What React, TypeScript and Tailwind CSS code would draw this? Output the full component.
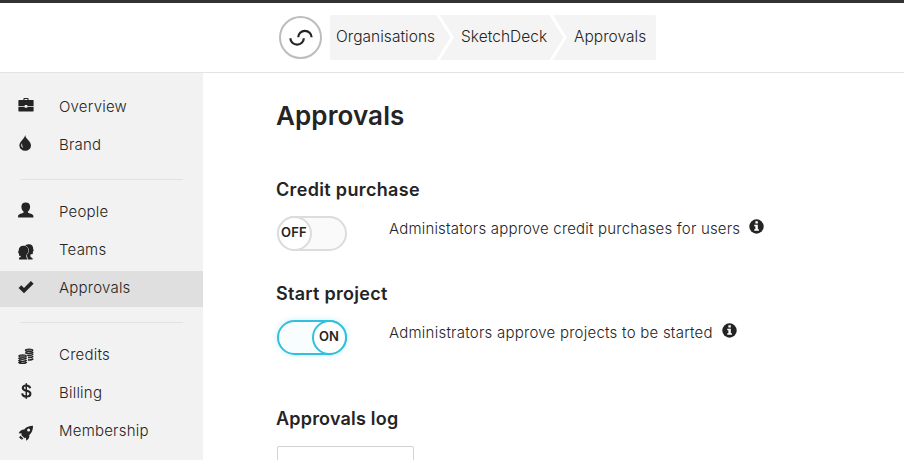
import React from "react";

function Briefcase() {
  return (
    <svg viewBox="0 0 16 16" className="h-4 w-4" fill="#242424">
      <path d="M5.400 3V2q0-1 1-1h3.200q1 0 1 1v1H15q.6 0 .6.6V9H9.300V8H6.700v1H.4V3.600Q.4 3 1 3zM6.500 3h3V2h-3zM.4 9.800h6.300v.9h2.600v-.9h6.300v4q0 .6-.6.6H1q-.6 0-.6-.6z" />
    </svg>
  );
}
function Drop() {
  return (
    <svg viewBox="0 0 16 16" className="h-4 w-4">
      <path fill="#242424" d="M7.200 0C7.500 4 13 6 13 10.500a5.800 5.300 0 0 1-11.600 0C1.400 6.500 6.500 4 7.200 0z" />
      <path d="M4 8C2.500 10.300 3.300 12.400 5.300 13.100 4.300 11.500 4.100 9.900 4 8z" fill="#f2f2f2" />
    </svg>
  );
}
function Person() {
  return (
    <svg viewBox="0 0 16 16" className="h-4 w-4" fill="#242424">
      <path d="M7.700.5c2.900 0 4.400 1.500 4.400 4.200 0 2-.8 3.800-2.200 4.800v.9c1 .9 5.500 1.500 5.500 3.500v1.600H.1v-1.600c0-2 4.500-2.600 5.500-3.500v-.9C4.200 8.500 3.400 6.700 3.400 4.700c0-2.700 1.500-4.200 4.300-4.200z" />
    </svg>
  );
}
function Team() {
  return (
    <svg viewBox="0 0 16 16" className="h-4 w-4" fill="#242424">
      <path d="M7.200 1.300C8.500.3 10 .2 11.200.2c2.700 0 4.100 2.300 3.900 4.400l.6 2.500-.8.5-.1 2.300-2.500.6.3 2.500 2 1.200v1.300H9.700z" />
      <path
        stroke="#f2f2f2"
        strokeWidth="1"
        paintOrder="stroke"
        d="M5.200 1.700c3.200 0 5.100 2.100 5.100 4.700 0 2.100-.9 3.300-1.900 4.500v2.300l1.200 2.300H1v-1.800l1.800-.8-.3-1.100H1V9.700L.1 8.500.7 6.300C.7 3.600 2.500 1.700 5.200 1.700z"
      />
    </svg>
  );
}
function Check() {
  return (
    <svg viewBox="0 0 16 16" className="h-4 w-4" fill="#242424">
      <path d="M.6 8.900 3.300 6.200 6 8.900 12.900 2 15.600 4.700 6 14.200z" />
    </svg>
  );
}
function Coins() {
  return (
    <svg viewBox="0 0 16 16" className="h-4 w-4" fill="#242424">
      <ellipse cx="11.100" cy="2.300" rx="4.300" ry="1.900" />
      <ellipse cx="4.600" cy="8.100" rx="4.300" ry="1.900" />
      <g fill="none" stroke="#242424" strokeWidth="1.600">
        <path d="M.5 9.800c1.500 1.900 6.700 1.900 8.200 0M.5 12c1.500 1.900 6.700 1.900 8.200 0M.5 14.100c1.500 1.900 6.700 1.900 8.200 0" />
        <path d="M7.200 4.500c2 1.400 6.700 1.200 8-.5M9.200 7.200c2 .4 5-.1 6-1.200M10 9.500c2 .2 4.300-.3 5.200-1.300M10 11.900c2 .2 4.300-.3 5.200-1.300" />
      </g>
      <path d="M8.400 2.300h5.400M1.900 8.100h5.400" stroke="#aaa" strokeWidth=".7" />
    </svg>
  );
}
function Dollar() {
  return (
    <svg viewBox="0 0 16 16" className="h-4 w-4" fill="none" stroke="#242424">
      <path d="M12.200 5.200C11.800 3.300 10.600 2.500 8.300 2.500 6.100 2.500 4.800 3.400 4.800 5c0 4 7.600 1.500 7.600 5.700 0 1.700-1.400 2.800-4.100 2.800-2.400 0-3.900-1.100-4.100-3.200" strokeWidth="2.100" />
      <path d="M8.300.2V15.800" strokeWidth="1.500" />
    </svg>
  );
}
function Rocket() {
  return (
    <svg viewBox="0 0 16 16" className="h-4 w-4" fill="#242424">
      <path fillRule="evenodd" d="M15 .8C11.300.8 8.300 1.900 6.200 4.600 3.800 4.500 2 5.600.7 8.300l3.200.1-.6 1.500 3.300 3.300 1.300-.6.300 3.200c2.500-1.500 3.500-3.300 3.100-5.700C13.800 8 15.200 4.800 15 .8zM10.600 3.600a1.500 1.500 0 1 1 0 3 1.500 1.500 0 0 1 0-3z" />
      <path d="M2.500 10.800.8 12.500l1.300.2-.2 1.200 1.500-.3.200 1.400L5.400 13.500z" />
    </svg>
  );
}
function Info() {
  return (
    <svg viewBox="0 0 16 16" className="h-[15px] w-[15px]">
      <circle cx="8" cy="8" r="7.700" fill="#242424" />
      <path fill="#fff" d="M6.800 2.500h2.600v2.300H6.800zM5.600 6h3.800v4.800h1.200v1.800H5.600v-1.800h1.200v-3H5.600z" />
    </svg>
  );
}

const groups = [
  [
    { label: "Overview", icon: <Briefcase />, nudge: "pb-[6px]" },
    { label: "Brand", icon: <Drop />, nudge: "pb-[6px]" },
  ],
  [
    { label: "People", icon: <Person />, nudge: "pb-[6px]" },
    { label: "Teams", icon: <Team />, nudge: "pt-[2px]" },
    { label: "Approvals", icon: <Check />, nudge: "pb-[4px]", active: true },
  ],
  [
    { label: "Credits", icon: <Coins />, nudge: "" },
    { label: "Billing", icon: <Dollar />, nudge: "pb-[6px]" },
    { label: "Membership", icon: <Rocket />, nudge: "pt-[2px]" },
  ],
];

function Sidebar() {
  return (
    <nav className="w-[203px] shrink-0 bg-[#f2f2f2] pt-[17px]">
      {groups.map((items, i) => (
        <div key={i}>
          {i > 0 && <div className="mx-5 mt-[15px] mb-[15px] h-px bg-[#e2e2e2]" />}
          {items.map((item) => (
            <div
              key={item.label}
              className={`mb-0.5 flex h-9 items-center pl-[18px] ${"active" in item && item.active ? "bg-[#dfdfdf]" : ""}`}
            >
              <span className={`flex w-[41px] ${item.nudge}`}>{item.icon}</span>
              <span className="pb-px text-[15px] font-[350] tracking-[0.22px]">{item.label}</span>
            </div>
          ))}
        </div>
      ))}
    </nav>
  );
}

function Separator() {
  return (
    <svg viewBox="0 0 20 45" className="h-[45px] w-5 shrink-0" fill="none" stroke="#fff" strokeWidth="3">
      <path d="M1.500-1 16.200 22.500 1.500 46" />
    </svg>
  );
}

function Header() {
  return (
    <header className="flex h-[73px] shrink-0 items-start border-t-[3px] border-b border-t-[#313335] border-b-[#e3e3e3] pl-[279px]">
      <div className="mt-[13px] flex h-[43px] w-[43px] items-center justify-center rounded-full border-2 border-[#bdbdbd]">
        <svg viewBox="0 0 24 18" className="h-[18px] w-6" fill="none" stroke="#242424" strokeWidth="2.200">
          <path d="M1.400 9.300A6.700 6.300 0 0 0 14.800 9.300" />
          <path d="M9.200 8.200A6.700 6.300 0 0 1 22.600 8.200" />
        </svg>
      </div>
      <div className="mt-3 ml-2 flex h-[45px] w-[326px] rounded-[2px] bg-[#f4f4f4] text-[15.500px] leading-[44px] font-[350] tracking-[0.03px] whitespace-nowrap">
        <span className="w-[106px] pl-[6px]">Organisations</span>
        <Separator />
        <span className="w-[93px] pl-[5px]">SketchDeck</span>
        <Separator />
        <span className="pl-[5px]">Approvals</span>
      </div>
    </header>
  );
}

export default function App() {
  return (
    <div className="flex h-[460px] w-[904px] flex-col overflow-hidden bg-white font-['Inter',sans-serif] text-[#242424]">
      <Header />
      <div className="flex min-h-0 flex-1">
        <Sidebar />
        <main className="flex flex-col items-start pl-[74px]">
          <h1 className="mt-[25px] -ml-px h-9 text-[26px] leading-9 font-semibold tracking-[0.1px]">Approvals</h1>
          <h2 className="mt-[44px] -ml-px h-6 text-[18px] leading-6 font-semibold tracking-[0.34px]">Credit purchase</h2>
          <div className="mt-[14px] flex h-[35px]">
            <div className="h-[35px] w-[70px] rounded-full border-2 border-[#dcdcdc] bg-[#fafafa]">
              <div className="-mt-0.5 -ml-0.5 flex h-[35px] w-[35px] items-center justify-center rounded-full border-2 border-[#dcdcdc] bg-white pr-px pb-px text-[13px] font-semibold tracking-[0.2px]">
                OFF
              </div>
            </div>
            <p className="ml-[42px] text-[15px] leading-[25px] font-[350] tracking-[0.19px]">Administators approve credit purchases for users</p>
            <span className="mt-[3px] ml-[9px]"><Info /></span>
          </div>
          <h2 className="mt-[31px] -ml-px h-6 text-[18px] leading-6 font-semibold tracking-[0.28px]">Start project</h2>
          <div className="mt-[14px] flex h-[35px]">
            <div className="flex h-[35px] w-[70px] justify-end rounded-full border-2 border-[#35bfdd] bg-[#f8fdff] shadow-[0_0_6px_#c8f0fa]">
              <div className="-mt-0.5 -mr-0.5 flex h-[35px] w-[35px] items-center justify-center rounded-full border-2 border-[#35bfdd] bg-white pr-px pb-px text-[13px] font-semibold">
                ON
              </div>
            </div>
            <p className="ml-[42px] text-[15px] leading-[25px] font-[350] tracking-[0.24px]">Administrators approve projects to be started</p>
            <span className="mt-[3px] ml-[9px]"><Info /></span>
          </div>
          <h2 className="mt-[52px] -ml-px h-6 text-[18px] leading-6 font-semibold tracking-[0.2px]">Approvals log</h2>
          <div className="mt-[15px] h-10 w-[137px] shrink-0 rounded-[2px] border border-[#d2d2d2]" />
        </main>
      </div>
    </div>
  );
}
